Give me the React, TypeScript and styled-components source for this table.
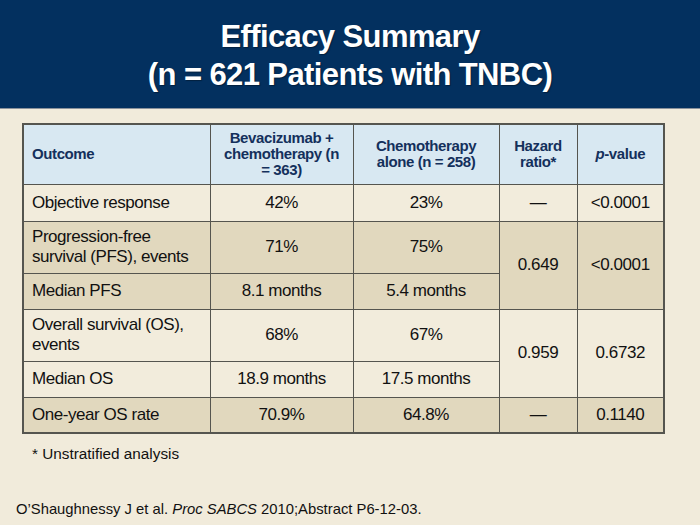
import styled, { createGlobalStyle } from "styled-components";

const GlobalStyle = createGlobalStyle`
  html, body {
    margin: 0;
    padding: 0;
    background: #f1ebdb;
  }
  body {
    font-family: "Liberation Sans", Arial, sans-serif;
  }
`;

const Slide = styled.div`
  width: 700px;
  height: 525px;
  display: flex;
  flex-direction: column;
  background: #f1ebdb;
  overflow: hidden;
`;

const TitleBar = styled.header`
  height: 109px;
  flex-shrink: 0;
  background: #03305f;
  border-bottom: 1px solid #8b929c;
  display: flex;
  flex-direction: column;
  align-items: center;
  justify-content: center;
  padding-top: 3px;
  box-sizing: border-box;
`;

const Title = styled.h1`
  margin: 0;
  color: #ffffff;
  font-size: 31px;
  line-height: 38px;
  font-weight: bold;
  text-align: center;
  letter-spacing: -0.6px;
  text-shadow: 1px 1px 1px rgba(0, 0, 0, 0.35);
`;

const Body = styled.main`
  flex: 1;
  display: flex;
  flex-direction: column;
  padding: 14px 0 0 22px;
`;

const Table = styled.table`
  width: 641px;
  border-collapse: collapse;
  table-layout: fixed;
  border: 2px solid #55554f;
`;

const HeadCell = styled.th<{ $left?: boolean; $w: number }>`
  box-sizing: border-box;
  width: ${(p) => p.$w}px;
  height: 60px;
  padding: 0 6px;
  background: #d8e8f2;
  border: 1.5px solid #55554f;
  color: #14305c;
  font-size: 15px;
  line-height: 16px;
  font-weight: bold;
  letter-spacing: -0.4px;
  text-align: ${(p) => (p.$left ? "left" : "center")};
  padding-left: ${(p) => (p.$left ? "8px" : "6px")};
  vertical-align: middle;
`;

const Row = styled.tr<{ $dark?: boolean; $h: number }>`
  height: ${(p) => p.$h}px;
  background: ${(p) => (p.$dark ? "#e1d8be" : "#f2ecdc")};
`;

const Cell = styled.td<{ $left?: boolean }>`
  padding: 0 8px;
  border: 1.5px solid #55554f;
  color: #111111;
  font-size: 17px;
  line-height: 20px;
  letter-spacing: -0.45px;
  text-align: ${(p) => (p.$left ? "left" : "center")};
  vertical-align: middle;
`;

const Footnote = styled.p`
  margin: 12px 0 0 10px;
  font-size: 15.3px;
  line-height: 16px;
  color: #111111;
`;

const Citation = styled.p`
  margin: auto 0 8px -6px;
  font-size: 14.8px;
  line-height: 16px;
  color: #111111;
`;

export default function App() {
  return (
    <>
      <GlobalStyle />
      <Slide>
        <TitleBar>
          <Title>
            Efficacy Summary
            <br />
            (n = 621 Patients with TNBC)
          </Title>
        </TitleBar>
        <Body>
          <Table>
            <thead>
              <tr>
                <HeadCell $left $w={187}>Outcome</HeadCell>
                <HeadCell $w={143}>
                  Bevacizumab +
                  <br />
                  chemotherapy (n
                  <br />= 363)
                </HeadCell>
                <HeadCell $w={146}>
                  Chemotherapy
                  <br />
                  alone (n = 258)
                </HeadCell>
                <HeadCell $w={78}>
                  Hazard
                  <br />
                  ratio*
                </HeadCell>
                <HeadCell $w={87}>
                  <i>p</i>-value
                </HeadCell>
              </tr>
            </thead>
            <tbody>
              <Row $h={37}>
                <Cell $left>Objective response</Cell>
                <Cell>42%</Cell>
                <Cell>23%</Cell>
                <Cell>—</Cell>
                <Cell>&lt;0.0001</Cell>
              </Row>
              <Row $dark $h={52}>
                <Cell $left>Progression-free survival (PFS), events</Cell>
                <Cell>71%</Cell>
                <Cell>75%</Cell>
                <Cell rowSpan={2}>0.649</Cell>
                <Cell rowSpan={2}>&lt;0.0001</Cell>
              </Row>
              <Row $dark $h={36}>
                <Cell $left>Median PFS</Cell>
                <Cell>8.1 months</Cell>
                <Cell>5.4 months</Cell>
              </Row>
              <Row $h={52}>
                <Cell $left>Overall survival (OS), events</Cell>
                <Cell>68%</Cell>
                <Cell>67%</Cell>
                <Cell rowSpan={2}>0.959</Cell>
                <Cell rowSpan={2}>0.6732</Cell>
              </Row>
              <Row $h={36}>
                <Cell $left>Median OS</Cell>
                <Cell>18.9 months</Cell>
                <Cell>17.5 months</Cell>
              </Row>
              <Row $dark $h={36}>
                <Cell $left>One-year OS rate</Cell>
                <Cell>70.9%</Cell>
                <Cell>64.8%</Cell>
                <Cell>—</Cell>
                <Cell>0.1140</Cell>
              </Row>
            </tbody>
          </Table>
          <Footnote>* Unstratified analysis</Footnote>
          <Citation>
            O’Shaughnessy J et al. <i>Proc SABCS</i> 2010;Abstract P6-12-03.
          </Citation>
        </Body>
      </Slide>
    </>
  );
}
